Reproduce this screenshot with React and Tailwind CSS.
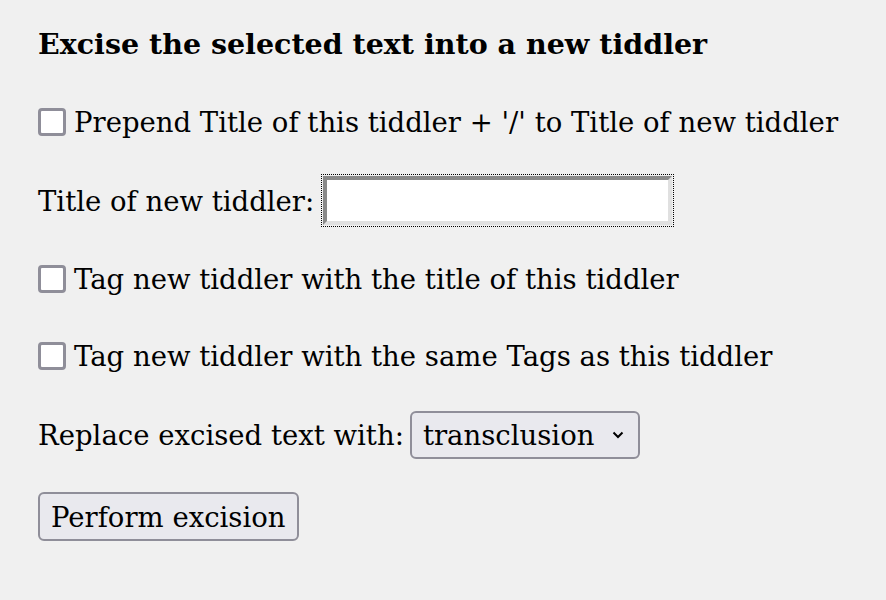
const serif = { fontFamily: '"DejaVu Serif", "Liberation Serif", serif' };

const Box = ({ label }) => (
  <label className="flex items-center gap-[8px] h-[30px]">
    <span className="w-[28px] h-[28px] rounded-[4px] border-[3px] border-[#8f8e99] bg-white shrink-0" />
    <span>{label}</span>
  </label>
);

export default function App() {
  return (
    <div className="w-[886px] h-[600px] bg-[#f0f0f0] text-black text-[27.5px] leading-[36px] pl-[38px] pt-[26px]" style={serif}>
      <h2 className="font-bold text-[28.5px] leading-[36px]">Excise the selected text into a new tiddler</h2>
      <div className="mt-[45px]">
        <Box label="Prepend Title of this tiddler + '/' to Title of new tiddler" />
      </div>
      <div className="mt-[37px] flex items-center gap-[7px]">
        <span>Title of new tiddler:</span>
        <span className="block w-[353px] h-[53px] border border-dotted border-black p-[1px]">
          <span className="block w-full h-full bg-white border-[4px] border-t-[#8a8a8a] border-l-[#8a8a8a] border-b-[#e0e0e0] border-r-[#e0e0e0]" />
        </span>
      </div>
      <div className="mt-[37px]">
        <Box label="Tag new tiddler with the title of this tiddler" />
      </div>
      <div className="mt-[47px]">
        <Box label="Tag new tiddler with the same Tags as this tiddler" />
      </div>
      <div className="mt-[40px] flex items-center gap-[6px]">
        <span>Replace excised text with:</span>
        <span className="flex items-center h-[48px] pl-[11px] pr-[13px] border-[2px] border-[#8f8e99] rounded-[6px] bg-[#e9e9ee]">
          <span>transclusion</span>
          <svg width="14" height="10" viewBox="0 0 14 10" className="ml-[17px]">
            <path d="M2.5 2.5l4.5 4.5 4.5-4.5" fill="none" stroke="#000" strokeWidth="2" />
          </svg>
        </span>
      </div>
      <div className="mt-[33px]">
        <span className="inline-flex items-center h-[49px] px-[11px] border-[2px] border-[#8f8e99] rounded-[6px] bg-[#e9e9ee]">
          Perform excision
        </span>
      </div>
    </div>
  );
}
